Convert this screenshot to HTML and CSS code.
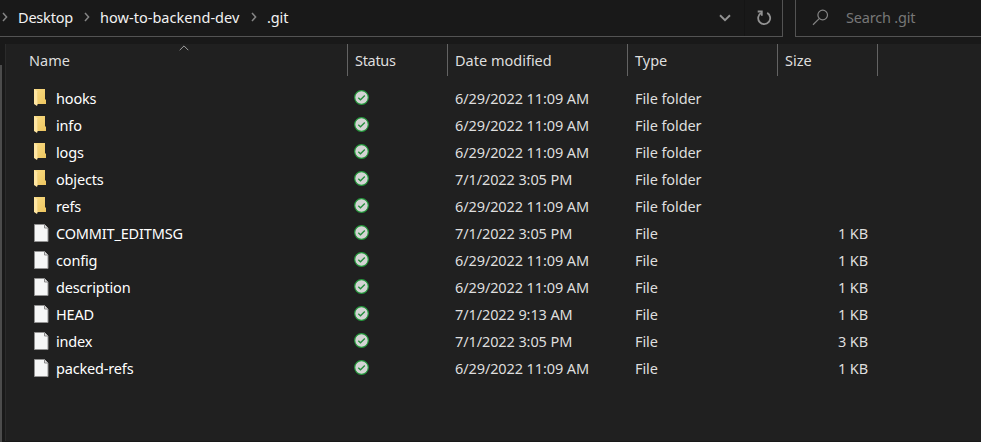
FILE: index.html
```
<!DOCTYPE html>
<html lang="en">
<head>
<meta charset="utf-8">
<title>.git</title>
<link rel="stylesheet" href="styles.css">
</head>
<body>
<svg class="defs" width="0" height="0">
  <defs>
    <linearGradient id="gold" x1="0" y1="0" x2="1" y2="1"><stop offset="0" stop-color="#f9dc85"/><stop offset="1" stop-color="#edc55f"/></linearGradient>
    <symbol id="folder" viewBox="0 0 16 18">
      <path d="M0 0H11V10L12 11V15H0Z" fill="url(#gold)"/>
      <path d="M0 0L4 2.5V14L3 17L0 15Z" fill="#ffe6a2"/>
      <path d="M3.5 2.5V14.5" stroke="#eccb72" stroke-width=".6"/>
    </symbol>
    <symbol id="file" viewBox="0 0 16 18">
      <path d="M.5 .5H10.5L14 4V17.5H.5Z" fill="#f6f7f7" stroke="#929292"/>
      <path d="M10.5 .5V4H14" fill="#ddd" stroke="#8b8b8b"/>
    </symbol>
    <symbol id="ok" viewBox="0 0 16 16">
      <circle cx="7.5" cy="7.5" r="6.8" fill="#d4d4d4" stroke="#249a3c" stroke-width="1.2"/>
      <path d="M4.3 7.7L6.5 9.8L10.8 5.5" fill="none" stroke="#238d3b" stroke-width="1.3"/>
    </symbol>
    <symbol id="sep" viewBox="0 0 6 10"><path d="M1 1L4.6 5L1 9" fill="none" stroke="#858585" stroke-width="1.5"/></symbol>
  </defs>
</svg>
<header class="toolbar">
  <nav class="address">
    <svg class="sep"><use href="#sep"/></svg><span class="crumb desktop">Desktop</span>
    <svg class="sep"><use href="#sep"/></svg><span class="crumb project">how-to-backend-dev</span>
    <svg class="sep"><use href="#sep"/></svg><span class="crumb">.git</span>
    <svg class="history" viewBox="0 0 12 8"><path d="M1 1.3L6 6.2L11 1.3" fill="none" stroke="#929292" stroke-width="1.9"/></svg>
    <span class="reload"><svg width="16" height="16" viewBox="0 0 16 16" fill="none" stroke="#929292" stroke-width="1.8"><path d="M5 3A6 6 0 1 0 11.2 2.9"/><path d="M1.7 1.5H5.8V5.8"/></svg></span>
  </nav>
  <div class="search">
    <svg width="17" height="17" viewBox="0 0 17 17" fill="none" stroke="#858585" stroke-width="1.2"><circle cx="10.7" cy="6" r="4.8"/><path d="M7.2 9.6L1 15.7"/></svg>
    <span>Search .git</span>
  </div>
</header>
<div class="body">
  <div class="scroll"><div class="thumb"></div></div>
  <main class="pane">
    <div class="head grid">
      <div class="name">Name<svg class="sort" viewBox="0 0 10 6"><path d="M.7 5.2L5 .9L9.3 5.2" fill="none" stroke="#a0a0a0"/></svg></div><div>Status</div><div>Date modified</div><div>Type</div><div>Size</div>
    </div>
    <div class="rows">
      <div class="row grid"><div class="name"><svg><use href="#folder"/></svg>hooks</div><div><svg><use href="#ok"/></svg></div><div>6/29/2022 11:09 AM</div><div>File folder</div><div class="size"></div></div>
      <div class="row grid"><div class="name"><svg><use href="#folder"/></svg>info</div><div><svg><use href="#ok"/></svg></div><div>6/29/2022 11:09 AM</div><div>File folder</div><div class="size"></div></div>
      <div class="row grid"><div class="name"><svg><use href="#folder"/></svg>logs</div><div><svg><use href="#ok"/></svg></div><div>6/29/2022 11:09 AM</div><div>File folder</div><div class="size"></div></div>
      <div class="row grid"><div class="name"><svg><use href="#folder"/></svg>objects</div><div><svg><use href="#ok"/></svg></div><div>7/1/2022 3:05 PM</div><div>File folder</div><div class="size"></div></div>
      <div class="row grid"><div class="name"><svg><use href="#folder"/></svg>refs</div><div><svg><use href="#ok"/></svg></div><div>6/29/2022 11:09 AM</div><div>File folder</div><div class="size"></div></div>
      <div class="row grid"><div class="name"><svg><use href="#file"/></svg>COMMIT_EDITMSG</div><div><svg><use href="#ok"/></svg></div><div>7/1/2022 3:05 PM</div><div>File</div><div class="size">1 KB</div></div>
      <div class="row grid"><div class="name"><svg><use href="#file"/></svg>config</div><div><svg><use href="#ok"/></svg></div><div>6/29/2022 11:09 AM</div><div>File</div><div class="size">1 KB</div></div>
      <div class="row grid"><div class="name"><svg><use href="#file"/></svg>description</div><div><svg><use href="#ok"/></svg></div><div>6/29/2022 11:09 AM</div><div>File</div><div class="size">1 KB</div></div>
      <div class="row grid"><div class="name"><svg><use href="#file"/></svg>HEAD</div><div><svg><use href="#ok"/></svg></div><div>7/1/2022 9:13 AM</div><div>File</div><div class="size">1 KB</div></div>
      <div class="row grid"><div class="name"><svg><use href="#file"/></svg>index</div><div><svg><use href="#ok"/></svg></div><div>7/1/2022 3:05 PM</div><div>File</div><div class="size">3 KB</div></div>
      <div class="row grid"><div class="name"><svg><use href="#file"/></svg>packed-refs</div><div><svg><use href="#ok"/></svg></div><div>6/29/2022 11:09 AM</div><div>File</div><div class="size">1 KB</div></div>
    </div>
  </main>
</div>
</body>
</html>
```
FILE: styles.css
```
* { box-sizing: border-box; }
body {
  margin: 0; height: 442px; overflow: hidden;
  background: #191919; color: #dedede;
  font: 14.5px/20px "Noto Sans", sans-serif;
  letter-spacing: -0.1px; white-space: nowrap;
}
svg { display: block; flex: none; }
.defs { position: absolute; }
.toolbar { display: flex; height: 44px; }
.address {
  display: flex; align-items: center; width: 783px; height: 37px;
  border-right: 1px solid #535353; border-bottom: 1px solid #535353;
  padding-left: 2px; color: #f2f2f2;
}
.sep { width: 6px; height: 10px; margin-top: -3px; }
.crumb { margin: -2px 0 0 10px; width: 50px; }
.crumb.desktop { width: 66px; letter-spacing: -0.2px; }
.crumb.project { width: 151px; letter-spacing: 0.03px; }
.history { width: 12px; height: 8px; margin-left: auto; }
.reload {
  display: flex; align-items: center; justify-content: center;
  width: 38px; height: 36px; margin-left: 13px; border-left: 1px solid #151515;
}
.search {
  display: flex; align-items: center; flex: 1; height: 37px; margin-left: 12px;
  border-left: 1px solid #535353; border-bottom: 1px solid #535353;
  padding-left: 16px; gap: 17px; color: #777; letter-spacing: -0.2px;
}
.search svg { margin-top: -2px; }
.search span { margin-top: -2px; }
.body { display: flex; height: 398px; }
.scroll { width: 5px; padding-top: 21px; }
.thumb { width: 2px; height: 377px; background: #4c4c4c; }
.pane {
  flex: 1; height: 397px; background: #202020;
  border-left: 1px solid #2b2b2b;
}
.grid { display: grid; grid-template-columns: 342px 100px 180px 150px 100px; }
.head { height: 32px; letter-spacing: 0; }
.head > div { border-right: 1px solid #636363; padding: 6px 0 0 7px; }
.head > div:nth-child(2) { letter-spacing: -0.3px; }
.head .name { position: relative; padding-left: 23px; }
.sort { position: absolute; left: 173px; top: 1px; width: 10px; height: 6px; }
.rows { padding-top: 9px; }
.row { height: 27px; }
.row > div { padding: 3px 0 0 7px; }
.row > div:nth-child(2) { padding: 5px 0 0 6px; }
.row > div:nth-child(2) svg { width: 16px; height: 16px; }
.row .name { display: flex; padding-left: 28px; color: #fff; letter-spacing: -0.17px; }
.row .name svg { width: 16px; height: 18px; margin: 1px 6px 0 0; }
.row .size { padding: 3px 10px 0 0; text-align: right; }
```
